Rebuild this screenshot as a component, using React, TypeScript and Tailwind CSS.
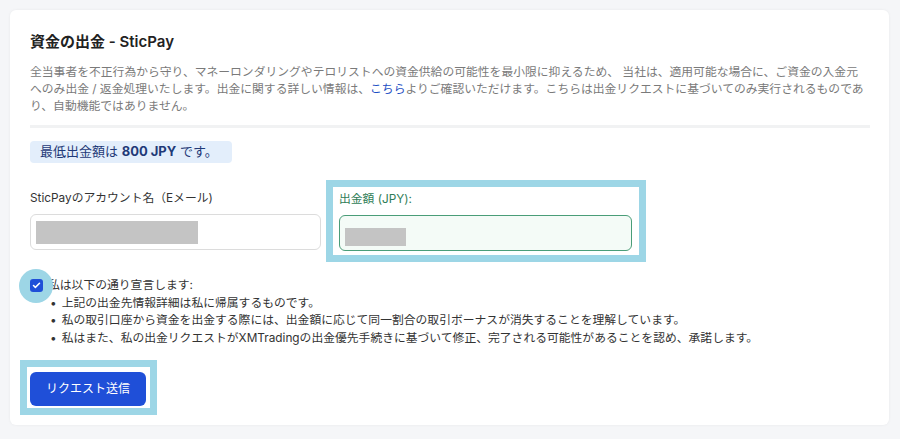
import { Check } from "lucide-react";

const font = { fontFamily: 'Inter, "Noto Sans CJK JP", sans-serif' };

export default function App() {
  return (
    <div className="w-[900px] h-[439px] bg-[#f5f6f8] pt-[10px] pl-[10px]" style={font}>
      <div className="w-[879px] h-[415px] bg-white rounded-md shadow-[0_0_3px_rgba(0,0,0,0.06)] pt-[22px] px-[20px]">
        <h1 className="text-[15px] leading-[20px] font-semibold text-[#222]">資金の出金 - SticPay</h1>

        <p className="mt-[12px] text-[11.8px] leading-[17px] text-[#7a7a7a] w-[834px]">
          全当事者を不正行為から守り、マネーロンダリングやテロリストへの資金供給の可能性を最小限に抑えるため、 当社は、適用可能な場合に、ご資金の入金元へのみ出金 / 返金処理いたします。出金に関する詳しい情報は、<span className="text-[#1d4fc4]">こちら</span>よりご確認いただけます。こちらは出金リクエストに基づいてのみ実行されるものであり、自動機能ではありません。
        </p>

        <div className="mt-[10px] w-[840px] h-[3px] bg-[#f1f2f3]" />

        <div className="mt-[13px] w-[202px] h-[22px] rounded bg-[#e3eefb] px-[10px] flex items-center text-[13px] text-[#1f3a78]">
          最低出金額は&nbsp;<b className="font-bold">800 JPY</b>&nbsp;です。
        </div>

        <div className="mt-[17px] flex items-start gap-[5px]">
          <div className="w-[291px] pt-[10px]">
            <div className="text-[11.8px] leading-[16px] text-[#333]">SticPayのアカウント名（Eメール)</div>
            <div className="mt-[8px] h-[36px] rounded-md border border-[#dcdcdc] bg-white flex items-center pl-[5px]">
              <div className="w-[162px] h-[23px] bg-[#c4c4c4]" />
            </div>
          </div>

          <div className="w-[320px] border-[7px] border-[#9dd6e6] bg-white pt-[4px] pb-[4px] pl-[6px] pr-[7px]">
            <div className="text-[11.8px] leading-[16px] text-[#2f7d57]">出金額 (JPY):</div>
            <div className="mt-[8px] h-[36px] rounded-md border border-[#4a9d78] bg-[#f4fbf7] flex items-center pl-[5px] pt-[8px]">
              <div className="w-[61px] h-[18px] bg-[#c4c4c4]" />
            </div>
          </div>
        </div>

        <div className="mt-[15px] relative text-[11.8px] leading-[17.7px] text-[#333]">
          <div className="absolute left-[-11px] top-[-8px] w-[34px] h-[34px] rounded-full bg-[#9dd6e6]" />
          <div className="flex items-center gap-[5px]">
            <div className="w-[13px] h-[13px] rounded-[3px] bg-[#1f4fd8] flex items-center justify-center relative z-10">
              <Check size={9} strokeWidth={4} color="#fff" />
            </div>
            <span>私は以下の通り宣言します:</span>
          </div>
          <ul className="pl-[20px]">
            <li className="flex gap-[5px]"><span>•</span>上記の出金先情報詳細は私に帰属するものです。</li>
            <li className="flex gap-[5px]"><span>•</span>私の取引口座から資金を出金する際には、出金額に応じて同一割合の取引ボーナスが消失することを理解しています。</li>
            <li className="flex gap-[5px]"><span>•</span>私はまた、私の出金リクエストがXMTradingの出金優先手続きに基づいて修正、完了される可能性があることを認め、承諾します。</li>
          </ul>
        </div>

        <div className="mt-[12px] ml-[-10px] inline-block border-[7px] border-[#9dd6e6] bg-white pt-[5px] pb-[2px] pl-[3px] pr-[4px]">
          <button className="w-[116px] h-[34px] rounded-md bg-[#1f4fd8] text-white text-[12px]">リクエスト送信</button>
        </div>
      </div>
    </div>
  );
}
